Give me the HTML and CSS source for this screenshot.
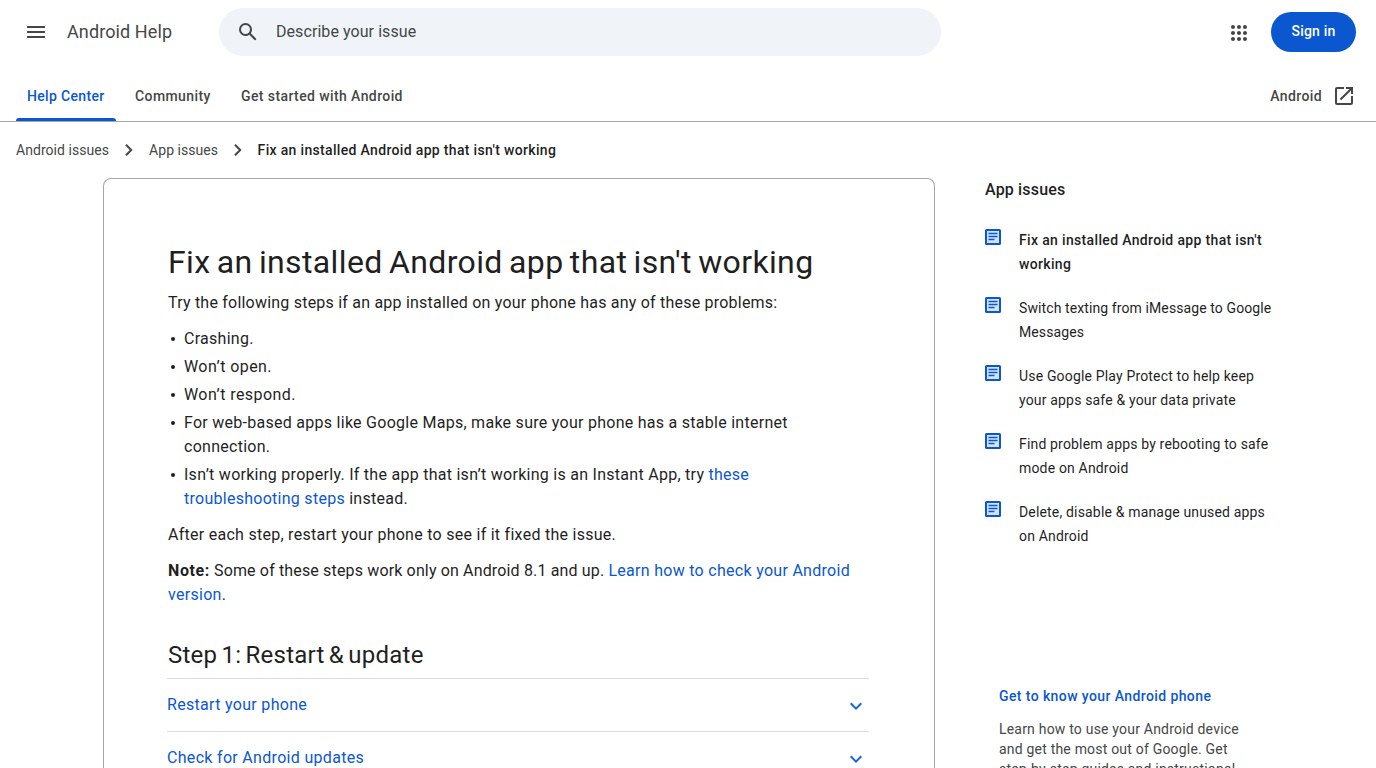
FILE: index.html
```html
<!DOCTYPE html>
<html lang="en">
<head>
<meta charset="utf-8">
<title>Fix an installed Android app that isn't working - Android Help</title>
<link rel="stylesheet" href="styles.css">
</head>
<body>
<header class="topbar">
  <button class="menu-button" aria-label="Main menu"><svg width="24" height="24" viewBox="0 0 24 24"><path d="M3 18h18v-2H3v2zm0-5h18v-2H3v2zm0-7v2h18V6H3z"/></svg></button>
  <a class="brand">Android Help</a>
  <div class="search"><svg width="24" height="24" viewBox="0 0 24 24"><path d="M20.49 19l-5.73-5.73C15.53 12.2 16 10.91 16 9.5A6.5 6.5 0 1 0 9.5 16c1.41 0 2.7-.47 3.77-1.24L19 20.49 20.49 19zM5 9.500C5 7.010 7.010 5 9.500 5S14 7.010 14 9.500 11.990 14 9.500 14 5 11.990 5 9.500z"/></svg><span class="search-text">Describe your issue</span></div>
  <button class="apps-button" aria-label="Google apps"><svg width="24" height="24" viewBox="0 0 24 24"><path d="M6,8c1.100,0 2,-0.900 2,-2s-0.900,-2 -2,-2 -2,0.900 -2,2 0.900,2 2,2zM12,20c1.100,0 2,-0.900 2,-2s-0.900,-2 -2,-2 -2,0.900 -2,2 0.900,2 2,2zM6,20c1.100,0 2,-0.900 2,-2s-0.900,-2 -2,-2 -2,0.900 -2,2 0.900,2 2,2zM6,14c1.100,0 2,-0.900 2,-2s-0.900,-2 -2,-2 -2,0.900 -2,2 0.900,2 2,2zM12,14c1.100,0 2,-0.900 2,-2s-0.900,-2 -2,-2 -2,0.900 -2,2 0.900,2 2,2zM16,6c0,1.100 0.900,2 2,2s2,-0.900 2,-2 -0.900,-2 -2,-2 -2,0.900 -2,2zM12,8c1.100,0 2,-0.900 2,-2s-0.900,-2 -2,-2 -2,0.900 -2,2 0.900,2 2,2zM18,14c1.100,0 2,-0.900 2,-2s-0.900,-2 -2,-2 -2,0.900 -2,2 0.900,2 2,2zM18,20c1.100,0 2,-0.900 2,-2s-0.900,-2 -2,-2 -2,0.900 -2,2 0.900,2 2,2z"/></svg></button>
  <a class="sign-in">Sign in</a>
</header>
<nav class="tabs">
  <a class="tab tab-active">Help Center</a>
  <a class="tab tab-community">Community</a>
  <a class="tab tab-start">Get started with Android</a>
  <a class="tab-external"><span>Android</span><svg width="24" height="24" viewBox="0 0 24 24"><path d="M19 19H5V5h7V3H5c-1.110 0-2 .9-2 2v14c0 1.100.89 2 2 2h14c1.100 0 2-.9 2-2v-7h-2v7zM14 3v2h3.590l-9.830 9.830 1.410 1.410L19 6.410V10h2V3h-7z"/></svg></a>
</nav>
<nav class="crumbs">
  <a class="crumb crumb-root">Android issues</a>
  <svg width="20" height="20" viewBox="0 0 20 20"><path d="M7 4.800l5.200 5.200L7 15.200"/></svg>
  <a class="crumb crumb-parent">App issues</a>
  <svg width="20" height="20" viewBox="0 0 20 20"><path d="M7 4.800l5.200 5.200L7 15.200"/></svg>
  <span class="crumb crumb-current">Fix an installed Android app that isn't working</span>
</nav>
<div class="content">
  <main class="article">
    <h1>Fix an installed Android app that isn't working</h1>
    <p class="intro">Try the following steps if an app installed on your phone has any of these problems:</p>
    <ul>
      <li>Crashing.</li>
      <li class="loose">Won’t open.</li>
      <li class="loose">Won’t respond.</li>
      <li>For web-based apps like Google Maps, make sure your phone has a stable internet connection.</li>
      <li>Isn’t working properly. If the app that isn’t working is an Instant App, try <a>these troubleshooting steps</a> instead.</li>
    </ul>
    <p>After each step, restart your phone to see if it fixed the issue.</p>
    <p class="note"><strong>Note:</strong> Some of these steps work only on Android 8.1 and up. <a>Learn how to check your Android version</a>.</p>
    <h2>Step 1: Restart &amp; update</h2>
    <div class="accordion">
      <div class="accordion-row"><span>Restart your phone</span><svg width="24" height="24" viewBox="0 0 24 24"><path d="M6.700 9.300l5.300 5.300 5.300-5.300"/></svg></div>
      <div class="accordion-row"><span>Check for Android updates</span><svg width="24" height="24" viewBox="0 0 24 24"><path d="M6.700 9.300l5.300 5.300 5.300-5.300"/></svg></div>
    </div>
  </main>
  <aside class="sidebar">
    <h3>App issues</h3>
    <div class="related related-current"><svg width="16" height="16" viewBox="0 0 16 16"><rect x="1" y="1" width="14" height="14" rx=".6"/><path d="M3.500 4.500h9M3.500 7.500h9M3.500 10.500h6"/></svg><span>Fix an installed Android app that isn't working</span></div>
    <div class="related related-switch"><svg width="16" height="16" viewBox="0 0 16 16"><rect x="1" y="1" width="14" height="14" rx=".6"/><path d="M3.500 4.500h9M3.500 7.500h9M3.500 10.500h6"/></svg><span>Switch texting from iMessage to Google Messages</span></div>
    <div class="related"><svg width="16" height="16" viewBox="0 0 16 16"><rect x="1" y="1" width="14" height="14" rx=".6"/><path d="M3.500 4.500h9M3.500 7.500h9M3.500 10.500h6"/></svg><span>Use Google Play Protect to help keep your apps safe &amp; your data private</span></div>
    <div class="related"><svg width="16" height="16" viewBox="0 0 16 16"><rect x="1" y="1" width="14" height="14" rx=".6"/><path d="M3.500 4.500h9M3.500 7.500h9M3.500 10.500h6"/></svg><span>Find problem apps by rebooting to safe mode on Android</span></div>
    <div class="related"><svg width="16" height="16" viewBox="0 0 16 16"><rect x="1" y="1" width="14" height="14" rx=".6"/><path d="M3.500 4.500h9M3.500 7.500h9M3.500 10.500h6"/></svg><span>Delete, disable &amp; manage unused apps on Android</span></div>
    <section class="promo">
      <h4>Get to know your Android phone</h4>
      <p>Learn how to use your Android device and get the most out of Google. Get step-by-step guides and instructional</p>
    </section>
  </aside>
</div>
</body>
</html>
```
FILE: styles.css
```css
* { box-sizing: border-box; }
html, body { height: 100%; overflow: hidden; }
body { margin: 0; background: #fff; color: #1f1f1f; font: 400 16px/24px Roboto, "Liberation Sans", sans-serif; }
svg { display: block; flex: none; fill: #444746; }
button { display: flex; padding: 0; border: 0; background: none; }
.topbar { display: flex; align-items: center; height: 64px; padding: 0 20px 0 24px; }
.brand { width: 152px; margin-left: 19px; font-size: 18px; letter-spacing: .1px; color: #444746; }
.search { display: flex; align-items: center; width: 722px; height: 48px; padding-left: 17px; border-radius: 24px; background: #f0f4f9; color: #444746; }
.search-text { margin-left: 16px; letter-spacing: .07px; }
.apps-button { margin-left: auto; margin-right: 20px; padding-top: 2px; }
.sign-in { width: 85px; height: 40px; border-radius: 20px; background: #0b57d0; color: #fff; font-size: 14px; font-weight: 500; line-height: 39px; text-align: center; letter-spacing: .2px; }
.tabs { display: flex; height: 58px; padding: 0 20px 0 16px; border-bottom: 1px solid #a5a7a8; color: #444746; font-size: 14px; font-weight: 500; line-height: 64px; letter-spacing: .4px; }
.tab { height: 57px; }
.tab-active { position: relative; width: 100px; padding-left: 11px; color: #0b57d0; letter-spacing: .34px; }
.tab-active::after { position: absolute; left: 0; right: 0; bottom: 0; height: 3px; border-radius: 3px 3px 0 0; background: #0b57d0; content: ""; }
.tab-community { width: 106px; padding-left: 19px; }
.tab-start { padding-left: 19px; }
.tab-external { display: flex; align-items: center; gap: 10px; height: 64px; margin-left: auto; }
.crumbs { display: flex; align-items: center; height: 56px; padding-left: 16px; gap: 10px; color: #444746; font-size: 14px; letter-spacing: .05px; }
.crumbs svg { fill: none; stroke: #444746; stroke-width: 2; }
.crumb-current { margin-left: -.5px; color: #1f1f1f; font-weight: 500; letter-spacing: .33px; }
.content { display: flex; align-items: flex-start; padding-left: 103px; }
.article { width: 832px; height: 590px; padding: 63px 64px 0; border: 1px solid #a5a7a8; border-bottom: 0; border-radius: 8px 8px 0 0; letter-spacing: .27px; }
h1, h2, h3, h4, p, ul { margin: 0; font-weight: 400; }
h1 { font-size: 32px; line-height: 40px; letter-spacing: .37px; word-spacing: -2px; margin-right: -8px; }
.intro { margin-top: 9px; letter-spacing: .215px; }
ul { padding: 0; list-style: none; margin: 12px 0; }
li { position: relative; margin-bottom: 4px; padding: 0 4px 0 16px; }
li:last-child { margin-bottom: 0; }
li::before { position: absolute; left: 3px; top: 10px; width: 4px; height: 4px; border-radius: 50%; background: #1f1f1f; content: ""; }
.loose { letter-spacing: .42px; }
p + p { margin-top: 12px; }
.article a { color: #0b57d0; }
.note { letter-spacing: .15px; }
.note a { letter-spacing: .29px; }
strong { font-weight: 700; letter-spacing: .6px; }
h2 { margin-top: 32px; font-size: 24px; line-height: 32px; letter-spacing: .25px; word-spacing: -2px; }
.accordion { margin: 7px 1px 0 -1px; letter-spacing: .31px; }
.accordion-row { display: flex; align-items: center; justify-content: space-between; height: 53px; border-top: 1px solid #dadce0; color: #0b57d0; }
.accordion-row svg { margin: 1px 1px 0 0; fill: none; stroke: #1967d2; stroke-width: 2; }
.sidebar { width: 300px; margin-left: 50px; }
h3 { font-size: 16px; font-weight: 500; line-height: 24px; margin-bottom: 26px; letter-spacing: .17px; }
.related { display: flex; gap: 18px; height: 68px; font-size: 14px; letter-spacing: .17px; }
.related-switch { letter-spacing: .1px; }
.related-current { font-weight: 500; letter-spacing: .34px; }
.related svg { margin-top: 1px; fill: #d3e3fd; stroke: #0b57d0; stroke-width: 2; }
.related path { stroke-width: 1.500; }
.related span { width: 256px; }
.promo { margin: 118px 0 0 14px; width: 245px; font-size: 14px; line-height: 20px; color: #444746; letter-spacing: .2px; }
h4 { font-weight: 500; color: #0b57d0; margin-bottom: 13px; letter-spacing: .4px; }
```
